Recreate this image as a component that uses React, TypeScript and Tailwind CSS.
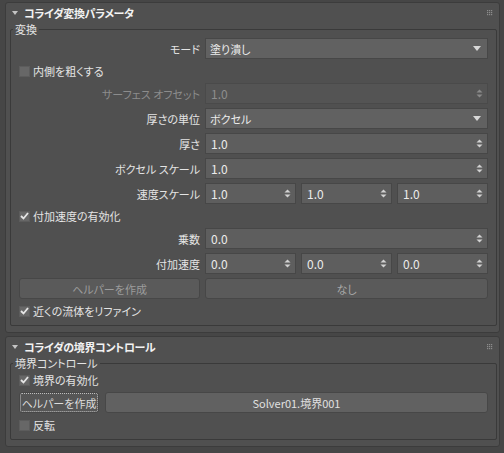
import React from "react";

const SpinArrows = ({ disabled }: { disabled?: boolean }) => (
  <svg width="7" height="9" viewBox="0 0 7 9" className="shrink-0">
    <polygon points="0.5,3.5 3.5,0.5 6.5,3.5" fill={disabled ? "#8a8a8a" : "#d2d2d2"} />
    <polygon points="0.5,5.5 3.5,8.5 6.5,5.5" fill={disabled ? "#8a8a8a" : "#d2d2d2"} />
  </svg>
);

const DropArrow = () => (
  <svg width="8" height="5" viewBox="0 0 8 5" className="shrink-0">
    <polygon points="0,0 8,0 4,5" fill="#d8d8d8" />
  </svg>
);

const Grip = () => (
  <svg width="6" height="6" viewBox="0 0 6 6" className="shrink-0">
    {[0, 2, 4].map((y) =>
      [0, 2, 4].map((x) => <rect key={`${x}-${y}`} x={x} y={y} width="1.2" height="1.2" fill="#8c8c8c" />)
    )}
  </svg>
);

const Check = ({ checked }: { checked?: boolean }) => (
  <span className="w-[11px] h-[11px] bg-[#676767] border border-[#5c5c5c] flex items-center justify-center shrink-0">
    {checked && (
      <svg width="9" height="8" viewBox="0 0 9 8">
        <polyline points="1,4 3.5,6.5 8,1" fill="none" stroke="#e6e6e6" strokeWidth="1.8" />
      </svg>
    )}
  </span>
);

const CheckRow = ({ label, checked }: { label: string; checked?: boolean }) => (
  <div className="h-[16px] flex items-center gap-[3px]">
    <Check checked={checked} />
    <span>{label}</span>
  </div>
);

const Spinner = ({ value, disabled }: { value: string; disabled?: boolean }) => (
  <div
    className={`h-[21px] border flex items-center justify-between pl-[5px] pr-[4px] text-[12px] ${
      disabled ? "bg-[#545454] border-[#4a4a4a] text-[#8e8e8e]" : "bg-[#5e5e5e] border-[#474747] text-[#ececec]"
    }`}
  >
    <span>{value}</span>
    <SpinArrows disabled={disabled} />
  </div>
);

const Dropdown = ({ value }: { value: string }) => (
  <div className="h-[21px] bg-[#616161] border border-[#474747] flex items-center justify-between pl-[4px] pr-[6px] text-[#ececec]">
    <span>{value}</span>
    <DropArrow />
  </div>
);

const Row = ({
  label,
  disabled,
  children,
}: {
  label: string;
  disabled?: boolean;
  children: React.ReactNode;
}) => (
  <div className="grid grid-cols-[181px_283px] gap-x-[5px] h-[21px] items-center">
    <span className={`text-right ${disabled ? "text-[#8c8c8c]" : ""}`}>{label}</span>
    {children}
  </div>
);

const Rollout = ({ title, group, children }: { title: string; group: string; children: React.ReactNode }) => (
  <section className="bg-[#505050] border border-[#3c3c3c] rounded-[3px] pb-[6px]">
    <header className="h-[19px] flex items-center px-[6px]">
      <svg width="6" height="4" viewBox="0 0 6 4" className="shrink-0">
        <polygon points="0,0 6,0 3,4" fill="#c4c4c4" />
      </svg>
      <span className="ml-[6px] font-bold text-[#f2f2f2] tracking-[-0.4px] flex-1">{title}</span>
      <Grip />
    </header>
    <fieldset className="ml-[4px] mr-[2px] border border-[#3a3a3a] rounded-[2px] pb-[6px]">
      <legend className="ml-[2px] px-[2px] leading-[14px]">{group}</legend>
      <div className="pt-[2px] px-[8px] flex flex-col gap-[4px]">{children}</div>
    </fieldset>
  </section>
);

export default function App() {
  return (
    <div className="w-[504px] h-[453px] bg-[#464646] pt-[2px] pl-[5px] pr-[4px] flex flex-col gap-[3px] text-[11px] leading-[14px] text-[#e4e4e4] font-['Noto_Sans_CJK_JP','Noto_Sans',sans-serif] [font-feature-settings:'palt']">
      <Rollout title="コライダ変換パラメータ" group="変換">
        <Row label="モード">
          <Dropdown value="塗り潰し" />
        </Row>
        <CheckRow label="内側を粗くする" />
        <Row label="サーフェス オフセット" disabled>
          <Spinner value="1.0" disabled />
        </Row>
        <Row label="厚さの単位">
          <Dropdown value="ボクセル" />
        </Row>
        <Row label="厚さ">
          <Spinner value="1.0" />
        </Row>
        <Row label="ボクセル スケール">
          <Spinner value="1.0" />
        </Row>
        <Row label="速度スケール">
          <div className="grid grid-cols-3 gap-[5px]">
            <Spinner value="1.0" />
            <Spinner value="1.0" />
            <Spinner value="1.0" />
          </div>
        </Row>
        <CheckRow label="付加速度の有効化" checked />
        <Row label="乗数">
          <Spinner value="0.0" />
        </Row>
        <Row label="付加速度">
          <div className="grid grid-cols-3 gap-[5px]">
            <Spinner value="0.0" />
            <Spinner value="0.0" />
            <Spinner value="0.0" />
          </div>
        </Row>
        <div className="grid grid-cols-[181px_283px] gap-x-[5px] h-[21px]">
          <button className="rounded-[3px] bg-[#5a5a5a] border border-[#474747] text-[#9c9c9c]">
            ヘルパーを作成
          </button>
          <button className="rounded-[3px] bg-[#5a5a5a] border border-[#474747] text-[#a8a8a8]">
            なし
          </button>
        </div>
        <CheckRow label="近くの流体をリファイン" checked />
      </Rollout>
      <Rollout title="コライダの境界コントロール" group="境界コントロール">
        <CheckRow label="境界の有効化" checked />
        <div className="grid grid-cols-[80px_1fr] gap-x-[6px] h-[21px]">
          <button className="rounded-[3px] bg-[#565656] border border-[#474747] text-[#dcdcdc] whitespace-nowrap px-0 outline-1 outline-dotted outline-[#bdbdbd] outline-offset-[-2px]">
            ヘルパーを作成
          </button>
          <button className="rounded-[3px] bg-[#616161] border border-[#474747] text-[#e0e0e0]">
            Solver01.境界001
          </button>
        </div>
        <CheckRow label="反転" />
      </Rollout>
    </div>
  );
}
